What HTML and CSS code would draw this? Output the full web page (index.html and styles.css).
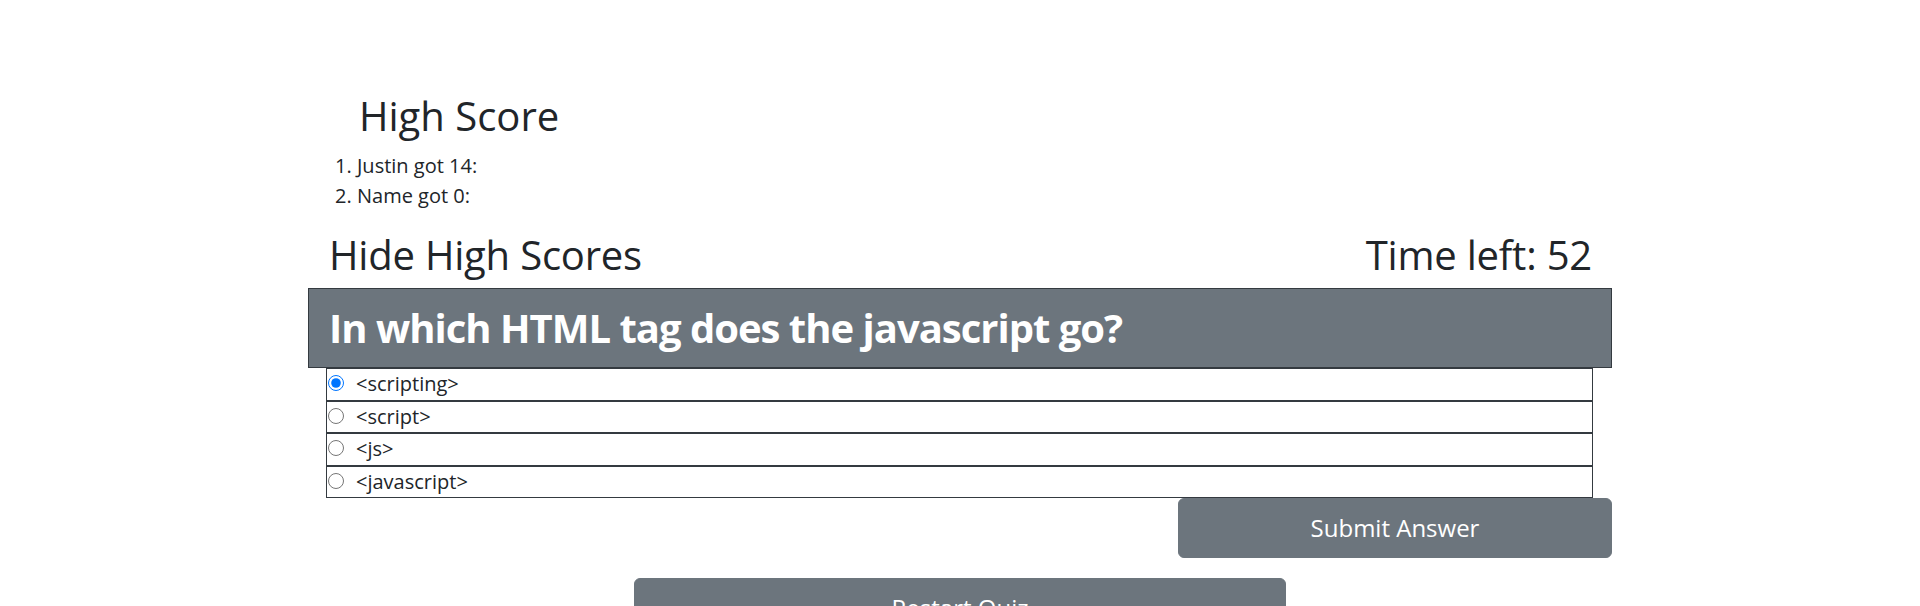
FILE: index.html
```html
<!DOCTYPE html>
<html lang="en">
<head>
<meta charset="utf-8">
<title>Quiz</title>
<link rel="stylesheet" href="styles.css">
</head>
<body>
<div class="container">
  <section class="scores">
    <h2 class="scores-title">High Score</h2>
    <ol class="scores-list">
      <li>Justin got 14:</li>
      <li>Name got 0:</li>
    </ol>
  </section>
  <div class="status-row">
    <h2 class="status-text">Hide High Scores</h2>
    <h2 class="status-text">Time left: 52</h2>
  </div>
  <div class="question">
    <h2 class="question-text">In which HTML tag does the javascript go?</h2>
  </div>
  <form class="quiz-form">
    <div class="options">
      <label class="option"><input type="radio" name="answer" checked><span>&lt;scripting&gt;</span></label>
      <label class="option"><input type="radio" name="answer"><span>&lt;script&gt;</span></label>
      <label class="option"><input type="radio" name="answer"><span>&lt;js&gt;</span></label>
      <label class="option"><input type="radio" name="answer"><span>&lt;javascript&gt;</span></label>
    </div>
    <div class="submit-row">
      <button type="button" class="btn btn-submit">Submit Answer</button>
    </div>
  </form>
  <div class="restart-row">
    <button type="button" class="btn btn-restart">Restart Quiz</button>
  </div>
</div>
</body>
</html>
```
FILE: styles.css
```css
* { box-sizing: border-box; }
html, body {
  margin: 0;
  padding: 0;
  background: #fff;
  color: #212529;
  font-family: "Open Sans", "Noto Sans", "Liberation Sans", sans-serif;
  font-size: 20px;
  line-height: 1.5;
  overflow: hidden;
}
.container {
  width: 1304px;
  margin: 0 auto;
  padding-top: 92px;
}
h2 {
  margin: 0;
  font-size: 40px;
  font-weight: 500;
  line-height: 1.2;
}
.scores-title {
  padding-left: 51px;
  margin-bottom: 11px;
}
.scores-list {
  margin: 0 0 20px;
  padding-left: 49px;
}
.status-row {
  display: flex;
  justify-content: space-between;
  padding: 0 20px 0 21px;
  margin-bottom: 9px;
}
.status-text {
  letter-spacing: -0.2px;
}
.question {
  background: #6c757d;
  border: 1px solid #343a40;
  padding: 15px 20px;
}
.question-text {
  color: #fff;
  font-weight: 700;
  letter-spacing: -1px;
}
.options {
  margin: 0 19px 0 18px;
}
.option {
  display: flex;
  align-items: center;
  height: 32.5px;
  border: 1px solid #343a40;
  padding-left: 1px;
  cursor: pointer;
}
.option input {
  width: 16px;
  height: 16px;
  margin: 0 12px 2px 0;
  accent-color: #0075ff;
}
.submit-row {
  display: flex;
  justify-content: flex-end;
}
.btn {
  background: #6c757d;
  color: #fff;
  border: 1px solid #6c757d;
  border-radius: 6px;
  font-family: inherit;
  font-size: 24px;
  line-height: 1.5;
  padding: 10px 20px;
  height: 60px;
}
.btn-submit {
  width: 434px;
}
.restart-row {
  display: flex;
  justify-content: center;
  padding-top: 20px;
}
.btn-restart {
  width: 652px;
}
```
